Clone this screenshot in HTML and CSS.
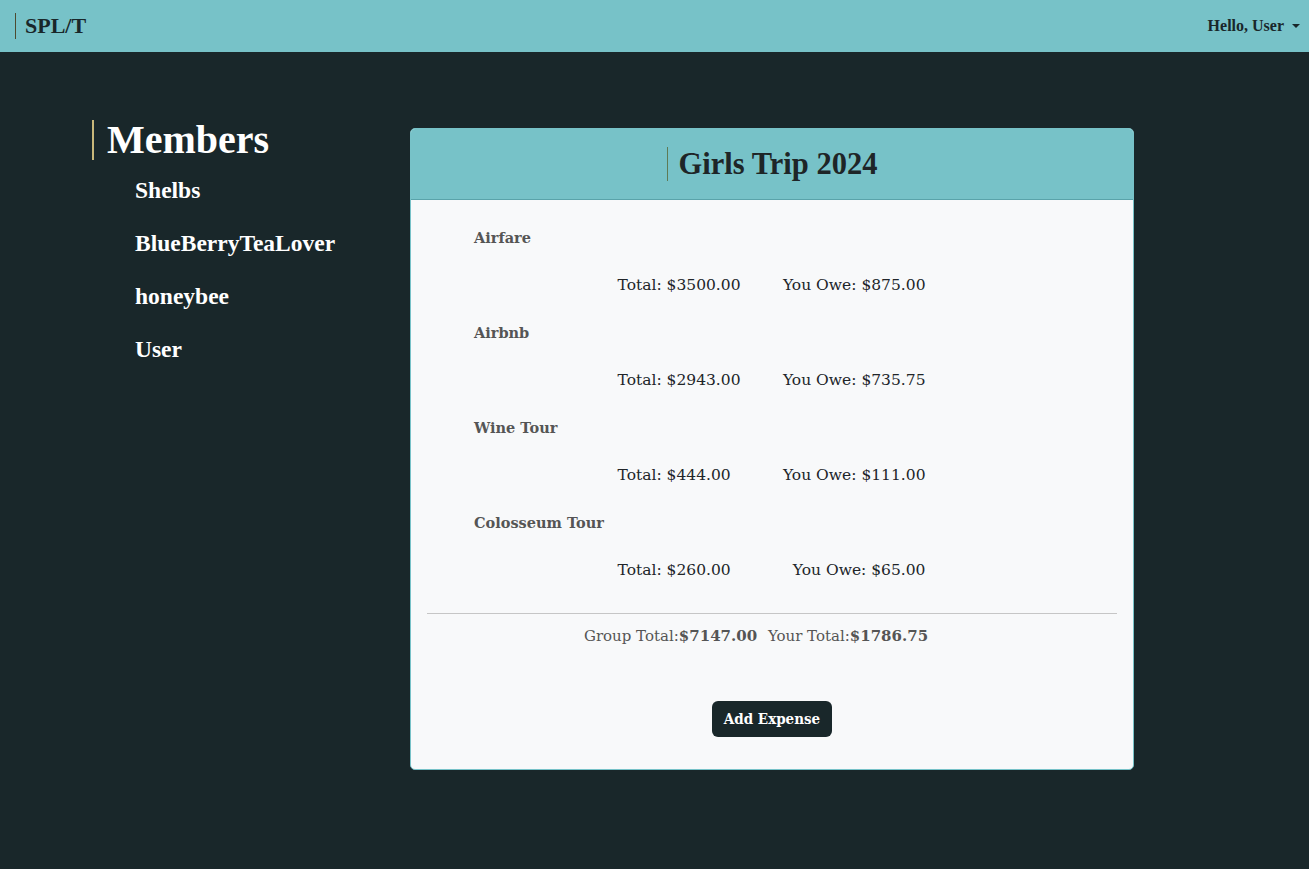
FILE: index.html
```html
<!DOCTYPE html>
<html lang="en">
<head>
<meta charset="utf-8">
<title>SPL/T</title>
<link rel="stylesheet" href="styles.css">
</head>
<body>
<nav class="navbar">
  <a class="brand" href="#">SPL/T</a>
  <div class="user-menu">Hello, User <span class="caret"></span></div>
</nav>
<main class="page">
  <aside class="members">
    <h2 class="members-title">Members</h2>
    <ul class="member-list">
      <li>Shelbs</li>
      <li>BlueBerryTeaLover</li>
      <li>honeybee</li>
      <li>User</li>
    </ul>
  </aside>
  <section class="card">
    <header class="card-header">
      <h1 class="trip-title">Girls Trip 2024</h1>
    </header>
    <div class="card-body">
      <div class="expense">
        <div class="expense-name">Airfare</div>
        <div class="expense-amounts"><span>Total: $3500.00</span><span>You Owe: $875.00</span></div>
      </div>
      <div class="expense">
        <div class="expense-name">Airbnb</div>
        <div class="expense-amounts"><span>Total: $2943.00</span><span>You Owe: $735.75</span></div>
      </div>
      <div class="expense">
        <div class="expense-name">Wine Tour</div>
        <div class="expense-amounts"><span>Total: $444.00</span><span>You Owe: $111.00</span></div>
      </div>
      <div class="expense">
        <div class="expense-name">Colosseum Tour</div>
        <div class="expense-amounts"><span>Total: $260.00</span><span>You Owe: $65.00</span></div>
      </div>
      <hr class="divider">
      <div class="totals">
        <span>Group Total:<b>$7147.00</b></span>
        <span>Your Total:<b>$1786.75</b></span>
      </div>
      <div class="actions">
        <button class="btn" type="button">Add Expense</button>
      </div>
    </div>
  </section>
</main>
</body>
</html>
```
FILE: styles.css
```css
* { box-sizing: border-box; }
html, body { margin: 0; padding: 0; }
body {
  background: #19272a;
  min-height: 869px;
  font-family: "DejaVu Serif", "Liberation Serif", serif;
  color: #212529;
}
.navbar {
  height: 52px;
  background: #77c2c8;
  display: flex;
  align-items: center;
  justify-content: space-between;
  padding: 0 9px 0 15px;
}
.brand {
  font-family: "Liberation Serif", serif;
  font-weight: bold;
  font-size: 22px;
  color: #19272a;
  text-decoration: none;
  border-left: 1px solid #4d4a30;
  padding-left: 9px;
  line-height: 26px;
}
.user-menu {
  font-family: "Liberation Serif", serif;
  font-weight: bold;
  font-size: 16px;
  color: #19272a;
  display: flex;
  align-items: center;
}
.caret {
  display: inline-block;
  margin-left: 8px;
  width: 0; height: 0;
  border-left: 4px solid transparent;
  border-right: 4px solid transparent;
  border-top: 4px solid #19272a;
}
.page {
  display: flex;
  padding: 68px 0 0 92px;
}
.members { width: 318px; }
.members-title {
  margin: 0;
  font-family: "Liberation Serif", serif;
  font-weight: bold;
  font-size: 40px;
  line-height: 40px;
  color: #fff;
  border-left: 2px solid #c8b77a;
  padding-left: 13px;
}
.member-list {
  list-style: none;
  margin: 17px 0 0;
  padding: 0 0 0 43px;
  font-family: "Liberation Serif", serif;
  font-weight: bold;
  font-size: 23.5px;
  color: #fff;
}
.member-list li { line-height: 26px; margin-bottom: 27px; }
.card {
  margin-top: 8px;
  width: 724px;
  background: #f8f9fa;
  border: 1px solid #77c2c8;
  border-radius: 5px;
  overflow: hidden;
}
.card-header {
  height: 71px;
  background: #77c2c8;
  border-bottom: 1px solid #5aa3aa;
  display: flex;
  align-items: center;
  justify-content: center;
}
.trip-title {
  margin: 0;
  font-family: "Liberation Serif", serif;
  font-weight: bold;
  font-size: 30.5px;
  line-height: 34px;
  color: #1e2527;
  border-left: 1px solid #5e7a55;
  padding-left: 11px;
}
.card-body { padding: 26px 16px 32px; }
.expense { padding-left: 47px; margin-bottom: 24px; }
.expense-name {
  font-size: 14.5px;
  font-weight: bold;
  color: #555;
  line-height: 24px;
}
.expense-amounts {
  width: 308px;
  margin: 23px auto 0;
  transform: translateX(-24px);
  display: flex;
  justify-content: space-between;
  font-size: 15.5px;
  line-height: 24px;
}
.divider {
  border: 0;
  border-top: 1px solid #c6c6c6;
  margin: 31px 0 10px;
}
.totals {
  text-align: center;
  font-size: 15px;
  line-height: 24px;
  color: #555;
  padding-right: 32px;
}
.totals span + span { margin-left: 6px; }
.totals b { font-weight: bold; }
.actions { display: flex; justify-content: center; margin-top: 53px; }
.btn {
  background: #19272a;
  color: #fff;
  border: 0;
  border-radius: 6px;
  height: 36px;
  padding: 0 12px;
  font-family: "DejaVu Serif", serif;
  font-stretch: condensed;
  font-size: 15px;
  font-weight: bold;
  cursor: pointer;
}
```
